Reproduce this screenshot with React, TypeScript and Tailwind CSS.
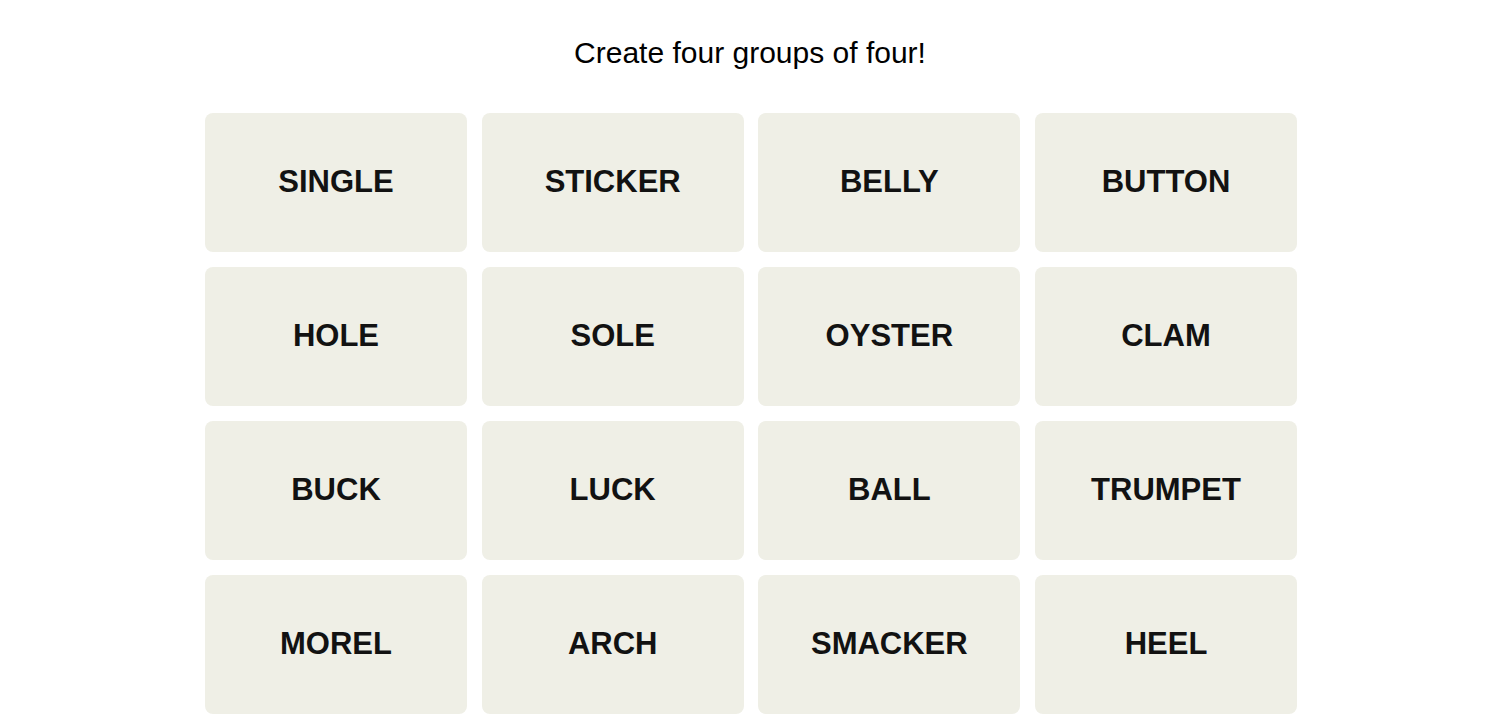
const words = [
  'SINGLE', 'STICKER', 'BELLY', 'BUTTON',
  'HOLE', 'SOLE', 'OYSTER', 'CLAM',
  'BUCK', 'LUCK', 'BALL', 'TRUMPET',
  'MOREL', 'ARCH', 'SMACKER', 'HEEL',
];

function Tile({ word }: { word: string }) {
  return (
    <button className="flex h-[139px] items-center justify-center rounded-lg bg-[#efefe6] text-[31px] font-bold uppercase text-[#121212]">
      {word}
    </button>
  );
}

export default function App() {
  return (
    <div className="flex min-h-screen flex-col items-center bg-white pt-[35px] font-['Liberation_Sans',Arial,sans-serif]">
      <h1 className="text-[30px] leading-[36px] font-normal text-black">Create four groups of four!</h1>
      <div className="mt-[42px] ml-[2px] grid w-[1092px] grid-cols-4 gap-x-[14.67px] gap-y-[15px]">
        {words.map((w) => (
          <Tile key={w} word={w} />
        ))}
      </div>
    </div>
  );
}
